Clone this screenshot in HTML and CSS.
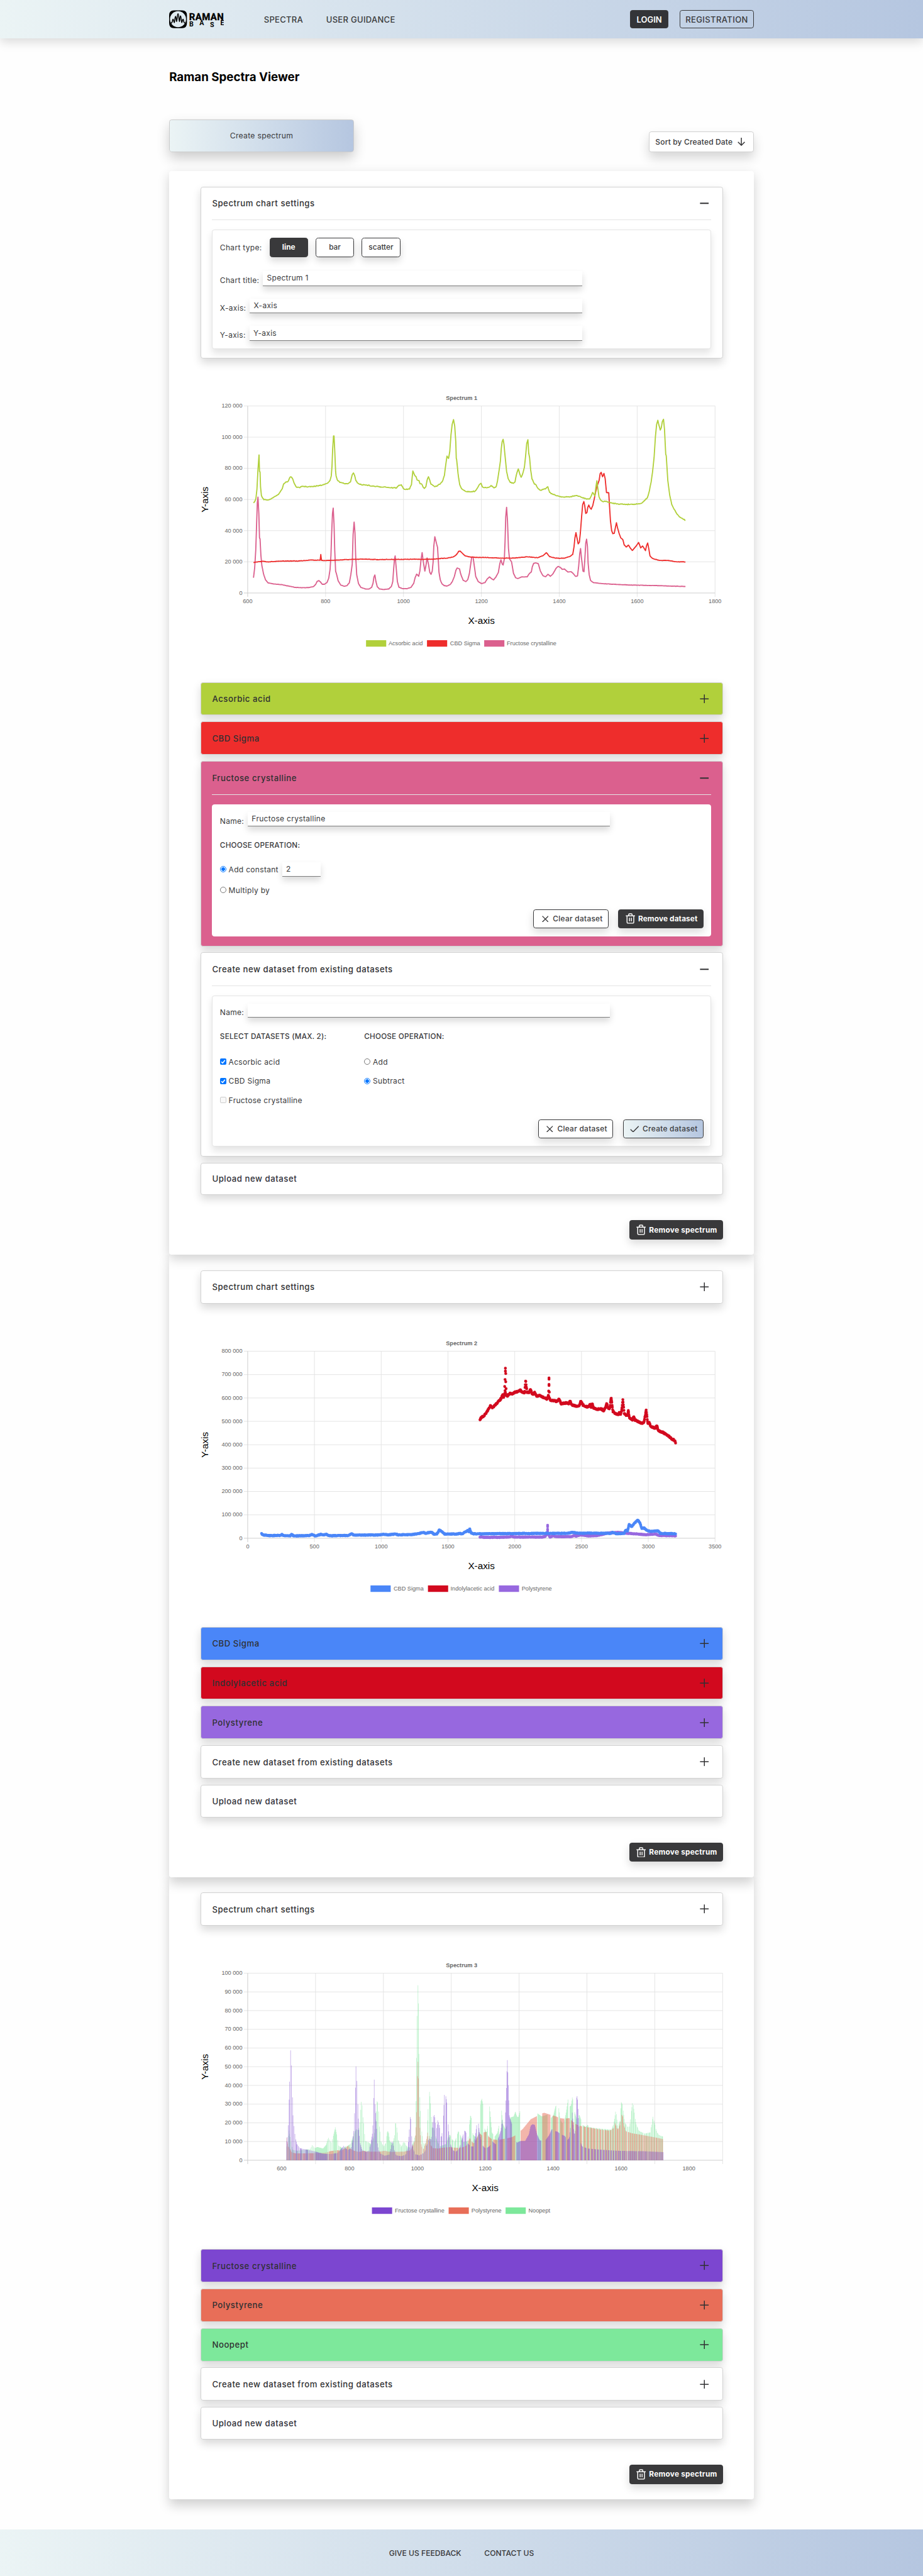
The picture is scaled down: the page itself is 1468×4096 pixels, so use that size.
FILE: index.html
```html
<!DOCTYPE html>
<html lang="en">
<head>
<meta charset="utf-8">
<title>Raman Spectra Viewer</title>
<link rel="stylesheet" href="styles.css">
</head>
<body>
<svg class="sprite" aria-hidden="true">
  <symbol id="i-plus" viewBox="0 0 20 20"><path d="M10 .5v19M.5 10h19" fill="none" stroke="currentColor" stroke-width="2"/></symbol>
  <symbol id="i-minus" viewBox="0 0 20 20"><path d="M.5 10h19" fill="none" stroke="currentColor" stroke-width="2.8"/></symbol>
  <symbol id="i-trash" viewBox="0 0 20 22"><path d="M.5 5.5h19M6.5 5V2.8Q6.500 1.200 8 1.200h4q1.500 0 1.500 1.600V5M3 5.500V19q0 2 2 2h10q2 0 2-2V5.500M8 9.500v7.500M12 9.500v7.500" fill="none" stroke="currentColor" stroke-width="1.900"/></symbol>
  <symbol id="i-x" viewBox="0 0 14 14"><path d="M.8.8l12.400 12.400M13.200.8L.8 13.200" fill="none" stroke="currentColor" stroke-width="1.800"/></symbol>
  <symbol id="i-check" viewBox="0 0 19 14"><path d="M1 7.500l5.500 5.300L18 .9" fill="none" stroke="currentColor" stroke-width="1.900"/></symbol>
</svg>

<header class="topbar">
  <div class="wrap topbar-in">
    <svg class="logo" viewBox="0 0 114 38">
      <path fill-rule="evenodd" d="M10 .5h17q10 0 10 10v17q0 10-10 10H10q-10 0-10-10v-17Q0 .5 10 .5zM18.500 2.300a16.700 16.700 0 1 0 0 33.400 16.700 16.700 0 1 0 0-33.400z"/>
      <path class="logo-wave" d="M3 27.500C8 27.500 6.500 19 8 19S9.500 26 10.700 26 11.800 13 13.300 13 14.600 24 15.600 24 16.800 7.500 18.500 7.500 20.400 24 21.400 24 22.200 12 23.700 12 25.300 26 26.300 26 27.500 19 29 19 29 27.500 34 27.500"/>
      <text class="logo-a" x="41.500" y="20.300" textLength="72" lengthAdjust="spacing">RAMAN</text>
      <g class="logo-b"><text x="42" y="34.300">B</text><text x="63" y="32">A</text><text x="85" y="35">S</text><text x="106.500" y="32">E</text></g>
    </svg>
    <nav class="nav"><a>SPECTRA</a><a>USER GUIDANCE</a></nav>
    <div class="auth"><a class="login">LOGIN</a><a class="registration">REGISTRATION</a></div>
  </div>
</header>

<main class="wrap">
  <h1>Raman Spectra Viewer</h1>
  <div class="toolbar">
    <button class="create">Create spectrum</button>
    <button class="sort">Sort by Created Date <svg viewBox="0 0 16 17"><path d="M8 0v15.500M1 8.800l7 7 7-7"/></svg></button>
  </div>

  <section class="card">
    <div class="item open settings">
      <div class="head"><span>Spectrum chart settings</span><svg><use href="#i-minus"/></svg></div>
      <div class="panel">
        <div class="types"><span>Chart type:</span><button class="on">line</button><button>bar</button><button>scatter</button></div>
        <div class="field"><label>Chart title:</label><span class="input">Spectrum 1</span></div>
        <div class="field"><label>X-axis:</label><span class="input">X-axis</span></div>
        <div class="field"><label>Y-axis:</label><span class="input">Y-axis</span></div>
      </div>
    </div>
    <svg class="chart" id="chart1" viewBox="0 0 1086 544"></svg>
    <div class="item lime"><div class="head"><span>Acsorbic acid</span><svg><use href="#i-plus"/></svg></div></div>
    <div class="item red"><div class="head"><span>CBD Sigma</span><svg><use href="#i-plus"/></svg></div></div>
    <div class="item pink open">
      <div class="head"><span>Fructose crystalline</span><svg><use href="#i-minus"/></svg></div>
      <div class="panel">
        <div class="field name"><label>Name:</label><span class="input">Fructose crystalline</span></div>
        <h4>CHOOSE OPERATION:</h4>
        <div class="op"><i class="radio checked"></i><span>Add constant</span><span class="input num">2</span></div>
        <div class="op second"><i class="radio"></i><span>Multiply by</span></div>
        <div class="actions"><button class="btn"><svg class="x"><use href="#i-x"/></svg>Clear dataset</button><button class="btn dark"><svg class="trash"><use href="#i-trash"/></svg>Remove dataset</button></div>
      </div>
    </div>
    <div class="item open">
      <div class="head"><span>Create new dataset from existing datasets</span><svg><use href="#i-minus"/></svg></div>
      <div class="panel">
        <div class="field name"><label>Name:</label><span class="input"></span></div>
        <div class="choices">
          <div class="col sets">
            <h4>SELECT DATASETS (MAX. 2):</h4>
            <div class="opt"><i class="box checked"><svg viewBox="0 0 13 13"><path d="M2.600 6.800l2.700 2.700 5-6"/></svg></i><span>Acsorbic acid</span></div>
            <div class="opt"><i class="box checked"><svg viewBox="0 0 13 13"><path d="M2.600 6.800l2.700 2.700 5-6"/></svg></i><span>CBD Sigma</span></div>
            <div class="opt"><i class="box off"></i><span>Fructose crystalline</span></div>
          </div>
          <div class="col">
            <h4>CHOOSE OPERATION:</h4>
            <div class="opt"><i class="radio"></i><span>Add</span></div>
            <div class="opt"><i class="radio checked"></i><span>Subtract</span></div>
          </div>
        </div>
        <div class="actions"><button class="btn"><svg class="x"><use href="#i-x"/></svg>Clear dataset</button><button class="btn blend"><svg class="check"><use href="#i-check"/></svg>Create dataset</button></div>
      </div>
    </div>
    <div class="item upload">Upload new dataset</div>
    <button class="btn dark remove"><svg class="trash"><use href="#i-trash"/></svg>Remove spectrum</button>
  </section>

  <section class="card">
    <div class="item"><div class="head"><span>Spectrum chart settings</span><svg><use href="#i-plus"/></svg></div></div>
    <svg class="chart" id="chart2" viewBox="0 0 1086 544"></svg>
    <div class="item blue"><div class="head"><span>CBD Sigma</span><svg><use href="#i-plus"/></svg></div></div>
    <div class="item crimson"><div class="head"><span>Indolylacetic acid</span><svg><use href="#i-plus"/></svg></div></div>
    <div class="item lilac"><div class="head"><span>Polystyrene</span><svg><use href="#i-plus"/></svg></div></div>
    <div class="item"><div class="head"><span>Create new dataset from existing datasets</span><svg><use href="#i-plus"/></svg></div></div>
    <div class="item upload">Upload new dataset</div>
    <button class="btn dark remove"><svg class="trash"><use href="#i-trash"/></svg>Remove spectrum</button>
  </section>

  <section class="card">
    <div class="item"><div class="head"><span>Spectrum chart settings</span><svg><use href="#i-plus"/></svg></div></div>
    <svg class="chart" id="chart3" viewBox="0 0 1086 544"></svg>
    <div class="item violet"><div class="head"><span>Fructose crystalline</span><svg><use href="#i-plus"/></svg></div></div>
    <div class="item coral"><div class="head"><span>Polystyrene</span><svg><use href="#i-plus"/></svg></div></div>
    <div class="item mint"><div class="head"><span>Noopept</span><svg><use href="#i-plus"/></svg></div></div>
    <div class="item"><div class="head"><span>Create new dataset from existing datasets</span><svg><use href="#i-plus"/></svg></div></div>
    <div class="item upload">Upload new dataset</div>
    <button class="btn dark remove"><svg class="trash"><use href="#i-trash"/></svg>Remove spectrum</button>
  </section>
</main>

<footer class="footer"><a>GIVE US FEEDBACK</a><a>CONTACT US</a></footer>
<script src="charts.js"></script>
</body>
</html>
```
FILE: styles.css
```css
* { box-sizing: border-box; }
html { background: #fff; overflow: hidden; }
body {
  margin: 0;
  width: 100%;
  height: 5357px;
  zoom: 0.76458;
  display: flex;
  flex-direction: column;
  font: 400 15px Inter, "Liberation Sans", sans-serif;
  color: #39393b;
  background: #fefefe;
}
button { font: inherit; color: inherit; margin: 0; }
h1, h4 { margin: 0; }
.sprite { display: none; }
.wrap { width: 1216px; margin: 0 auto; }

.topbar {
  height: 80px;
  flex: none;
  background: linear-gradient(90deg, #ebf4f5, #b5c6e0);
  box-shadow: 0 8px 20px rgba(0, 0, 0, .14);
}
.topbar-in { height: 80px; display: flex; align-items: center; }
.logo { width: 114px; height: 38px; }
.logo-wave { fill: none; stroke: #000; stroke-width: 2; }
.logo-a { font: 700 19.500px Roboto, sans-serif; stroke: #000; stroke-width: .5; }
.logo-b { font: 700 14px Roboto, sans-serif; }
.nav { display: flex; gap: 48px; margin-left: 83px; font-size: 17px; letter-spacing: .4px; font-weight: 450; }
.auth { display: flex; gap: 24px; margin-left: auto; }
.login, .registration {
  height: 38px;
  display: flex;
  align-items: center;
  justify-content: center;
  border: 1.500px solid #39393b;
  border-radius: 5px;
  font-size: 17px;
}
.login { width: 79px; background: #333438; color: #fff; font-weight: 600; }
.registration { width: 154px; font-weight: 450; letter-spacing: .55px; }

h1 { margin-top: 66px; height: 28px; line-height: 28px; font-size: 24.500px; font-weight: 700; color: #000; white-space: nowrap; }
.toolbar { display: flex; justify-content: space-between; align-items: flex-end; margin-top: 74px; height: 68px; }
.create {
  width: 384px;
  height: 68px;
  border: 1.500px solid #ccc;
  border-radius: 5px;
  background: linear-gradient(90deg, #ebf4f5, #b5c6e0);
  box-shadow: 0 12px 26px rgba(0, 0, 0, .2);
  font-size: 16px;
  letter-spacing: .35px;
}
.sort {
  width: 218px;
  height: 42px;
  padding: 0 12px;
  display: flex;
  align-items: center;
  justify-content: space-between;
  border: 1.500px solid #d0d0d0;
  border-radius: 5px;
  background: #fff;
  box-shadow: 0 12px 22px rgba(0, 0, 0, .16);
  font-size: 15.700px;
  letter-spacing: .2px;
  font-weight: 500;
  white-space: nowrap;
}
.sort svg { width: 16px; height: 17px; margin-right: 4px; fill: none; stroke: #39393b; stroke-width: 2; }

.card {
  display: flex;
  flex-direction: column;
  padding: 32px 64px 32px 65px;
  border-radius: 5px;
  background: #fff;
  box-shadow: 0 8px 24px rgba(0, 0, 0, .18);
}
.toolbar + .card { margin-top: 40px; }
.card + .card { box-shadow: 0 12px 24px rgba(0, 0, 0, .18); clip-path: inset(0 -50px -50px -50px); }
.card { position: relative; z-index: 3; }
.card + .card { z-index: 2; }
.card + .card + .card { z-index: 1; }

.item {
  border: 1.500px solid #d2d2d2;
  border-radius: 5px;
  background: #fff;
  padding: 0 23px;
  box-shadow: 0 8px 18px rgba(0, 0, 0, .15);
  font-size: 17.200px;
  font-weight: 500;
}
.item + .item { margin-top: 13px; }
.head { height: 66.500px; display: flex; align-items: center; justify-content: space-between; letter-spacing: .72px; color: #303032; }
.head svg { width: 19px; height: 19px; margin-right: 5px; }
.open { padding-bottom: 19.500px; }
.open .head { height: 69px; border-bottom: 1.500px solid #e4e4e4; }
.upload { height: 67.500px; display: flex; align-items: center; letter-spacing: .72px; color: #303038; }
.lime { background: #b1d03b; }
.red { background: #ee2d2c; }
.pink { background: #db608e; }
.blue { background: #4a86f8; }
.crimson { background: #d2091e; }
.lilac { background: #9768df; }
.violet { background: #7c46d0; }
.coral { background: #e86e58; }
.mint { background: #7de89b; }

.panel {
  margin-top: 19.500px;
  padding: 15px;
  border: 1.500px solid #e4e4e4;
  border-radius: 5px;
  background: #fff;
  box-shadow: 0 8px 16px rgba(0, 0, 0, .11);
  font-size: 15.700px;
  letter-spacing: .4px;
  font-weight: 400;
}
.pink .panel { border-color: #fff; box-shadow: none; }
.types { display: flex; align-items: center; height: 41px; }
.types > span { width: 103px; }
.types button {
  width: 80px;
  height: 40px;
  margin-right: 16px;
  padding: 0;
  border: 1.500px solid #39393b;
  border-radius: 6px;
  background: #fff;
  box-shadow: 0 8px 16px rgba(0, 0, 0, .15);
  font-size: 15.500px;
  font-weight: 500;
}
.types button.on { background: #39393b; color: #fff; font-weight: 700; }
.field { display: flex; height: 31px; width: 753px; margin-top: 26px; white-space: nowrap; }
.types + .field { margin-top: 29px; }
.field label { margin: 9px 8px 0 0; }
.input {
  flex: 1;
  padding: 5.500px 8px;
  border-bottom: 1.500px solid #7d7d7d;
  box-shadow: 0 8px 14px rgba(0, 0, 0, .15);
  background: #fff;
  line-height: 19px;
}
.field.name { margin-top: 0; height: 30px; width: 811px; }
h4 { margin-top: 30px; height: 20px; line-height: 20px; font-size: 15.300px; font-weight: 500; letter-spacing: .3px; }
.op { display: flex; align-items: center; height: 30px; margin-top: 24px; }
.op .num { flex: none; width: 80px; height: 30px; margin-left: 8px; }
.op.second { height: 20px; margin-top: 18px; }
.radio, .box { width: 13px; height: 13px; margin-right: 5px; flex: none; border: 1.500px solid #777; background: #fff; }
.radio { border-radius: 50%; }
.radio.checked { border-color: #0075ff; background: radial-gradient(circle, #0075ff 0 3.500px, #fff 4px); }
.box { border-radius: 2.500px; }
.box.checked { border: 0; background: #0075ff; }
.box.off { border-color: #ccc; background: #f8f8f8; }
.box svg { display: block; fill: none; stroke: #fff; stroke-width: 2; }
.choices { display: flex; }
.sets { width: 300px; }
.choices h4 + .opt { margin-top: 31px; }
.opt { display: flex; align-items: center; height: 20px; margin-top: 20px; }
.actions { display: flex; justify-content: flex-end; gap: 20px; margin-top: 30px; }
.btn {
  height: 40px;
  padding: 0 11px 0 14px;
  display: flex;
  align-items: center;
  border: 1.500px solid #39393b;
  border-radius: 5px;
  background: #fff;
  box-shadow: 0 8px 18px rgba(0, 0, 0, .15);
  font-size: 15.500px;
  letter-spacing: .4px;
  font-weight: 500;
  white-space: nowrap;
}
.dark { background: #39393b; color: #fff; font-weight: 650; letter-spacing: .15px; }
.blend { background: linear-gradient(90deg, #ebf4f5, #b5c6e0); }
.btn .x { width: 14px; height: 14px; margin: 0 9px 0 2px; }
.btn .check { width: 19px; height: 14px; margin-right: 7px; }
.btn .trash { width: 20px; height: 22px; margin-right: 6px; }
.remove { align-self: flex-end; margin-top: 52.500px; letter-spacing: .3px; }

.chart { width: 1086px; height: 544.500px; margin: 64px 0; display: block; overflow: visible; }
.chart text { font: 12px "Liberation Sans", Arial, sans-serif; fill: #666; }
.chart .title { font-weight: 700; }
.chart .axis { font-size: 20px; fill: #000; }
.chart .grid { stroke: #e2e2e2; stroke-width: 1.200; fill: none; }
.chart .base { stroke: #c9c9c9; stroke-width: 1.200; fill: none; }

.footer {
  margin-top: auto;
  height: 96px;
  flex: none;
  display: flex;
  align-items: center;
  justify-content: center;
  gap: 48px;
  background: linear-gradient(90deg, #ebf4f5, #b5c6e0);
  font-size: 15.800px;
  font-weight: 450;
}
```
FILE: charts.js
```js
const NS = 'http://www.w3.org/2000/svg';
const TOP = 34.4, BOTTOM = 423.4, LEFT = 98;

function el(svg, tag, attrs, text) {
  const e = document.createElementNS(NS, tag);
  for (const k in attrs) e.setAttribute(k, attrs[k]);
  if (text !== undefined) e.textContent = text;
  svg.appendChild(e);
  return e;
}

let seed = 7;
const rnd = () => (seed = (seed * 16807) % 2147483647) / 2147483647 - 0.5;

// "x,y x,y ..." -> [[x, y], ...]
const parse = s => s.trim().split(/\s+/).map(p => p.split(',').map(Number));

function at(pts, x) {
  for (let i = 1; i < pts.length; i++) {
    if (x <= pts[i][0]) {
      const [x0, y0] = pts[i - 1], [x1, y1] = pts[i];
      return y0 + (y1 - y0) * (x - x0) / (x1 - x0 || 1);
    }
  }
  return pts[pts.length - 1][1];
}

function frame(svg, o) {
  const n = o.yLabels.length - 1;
  let d = '';
  o.yLabels.forEach((label, i) => {
    const y = BOTTOM - (BOTTOM - TOP) * i / n;
    if (i) d += `M${LEFT - 8} ${y}H${o.right}`;
    el(svg, 'text', { x: LEFT - 11, y: y + 3.6, 'text-anchor': 'end' }, label);
  });
  o.xLines.forEach((x, i) => { if (i) d += `M${x} ${TOP}V${BOTTOM + 8}`; });
  el(svg, 'path', { d, class: 'grid' });
  el(svg, 'path', { d: `M${LEFT} ${TOP}V${BOTTOM + 8}M${LEFT - 8} ${BOTTOM}H${o.right}`, class: 'base' });
  o.xLabels.forEach(([x, t]) => el(svg, 'text', { x, y: 445, 'text-anchor': 'middle' }, t));
  el(svg, 'text', { x: 543, y: 21.5, 'text-anchor': 'middle', class: 'title' }, o.title);
  el(svg, 'text', { x: o.mid, y: 488, 'text-anchor': 'middle', class: 'axis' }, 'X-axis');
  el(svg, 'text', { x: 0, y: 0, 'text-anchor': 'middle', class: 'axis', transform: 'translate(16 229) rotate(-90)' }, 'Y-axis');
  o.legend.forEach(([x, color, tx, t]) => {
    el(svg, 'rect', { x, y: 521.5, width: 42, height: 13.5, fill: color });
    el(svg, 'text', { x: tx, y: 531.8 }, t);
  });
}

const steps = (a, b, n) => Array.from({ length: n + 1 }, (_, i) => a + (b - a) * i / n);
const thousands = (max, step) => {
  const out = ['0'];
  for (let v = step; v <= max; v += step) out.push(v + ' 000');
  return out;
};

// Spectrum 1: lines
{
  const svg = document.getElementById('chart1');
  const xs = steps(LEFT, 1070.2, 6);
  frame(svg, {
    title: 'Spectrum 1', right: 1070.2, mid: 584.2, xLines: xs,
    xLabels: xs.map((x, i) => [x, 600 + i * 200]), yLabels: thousands(120, 20),
    legend: [[344.2, '#b1d03b', 391, 'Acsorbic acid'], [471, '#ee2d2c', 519, 'CBD Sigma'], [590, '#db608e', 637, 'Fructose crystalline']]
  });
  const series = [
    ['#db608e', 1.5, `357,1108 364,1050 370,950 375,800 379,680 383,647 388,740 392,880 395,885 400,980 406,1040 415,1085 427,1120 442,1137 480,1144 520,1147 560,1155 600,1163 640,1165 680,1164 707,1158 718,1147 728,1128 738,1124 747,1132 757,1145 770,1145 785,1135 795,1110 803,1060 808,980 812,860 817,740 821,709 826,800 830,950 835,1070 840,1085 850,1125 865,1150 885,1156 900,1154 915,1137 924,1090 932,1030 937,860 943,789 948,850 952,980 958,1090 968,1140 982,1163 1010,1172 1030,1172 1045,1163 1053,1140 1058,1105 1064,1092 1070,1130 1078,1160 1090,1172 1115,1175 1145,1172 1160,1158 1168,1130 1173,1060 1178,1000 1182,983 1187,1040 1195,1130 1204,1162 1225,1170 1250,1171 1275,1162 1290,1140 1299,1105 1307,1087 1319,1099 1326,1070 1332,1010 1339,964 1345,1010 1355,1070 1361,1040 1368,995 1376,1030 1384,1078 1391,1088 1398,1070 1403,1020 1407,930 1413,873 1420,900 1429,935 1433,1000 1437,1075 1445,1120 1455,1143 1468,1153 1485,1155 1502,1147 1515,1130 1527,1100 1536,1065 1543,1052 1557,1057 1562,1080 1568,1098 1578,1122 1593,1130 1605,1118 1614,1085 1622,1030 1628,990 1636,990 1643,1040 1651,1100 1666,1130 1685,1141 1705,1136 1718,1115 1732,1103 1743,1113 1755,1120 1768,1105 1783,1078 1791,1030 1798,1005 1806,1030 1811,1035 1818,1000 1822,900 1826,760 1831,705 1836,780 1842,940 1848,1000 1860,1017 1871,1082 1883,1107 1896,1112 1918,1103 1951,1103 1963,1085 1975,1075 1981,1045 1989,1025 2001,1023 2016,1028 2028,1070 2043,1096 2058,1102 2072,1088 2086,1100 2103,1083 2118,1055 2131,1043 2143,1048 2155,1060 2168,1058 2188,1075 2208,1074 2220,1085 2233,1100 2244,1097 2251,1040 2257,970 2262,941 2268,1000 2276,1070 2282,1073 2287,1000 2292,910 2297,887 2302,930 2306,1025 2312,1090 2320,1123 2338,1136 2388,1141 2468,1146 2568,1150 2718,1153 2873,1158`],
    ['#ee2d2c', 2.5, `357,1021 380,1018 410,1013 440,1017 500,1014 560,1012 620,1012 690,1006 745,1008 749,975 753,1009 820,1008 900,1004 1010,1001 1080,1004 1150,1003 1300,1002 1400,1002 1440,998 1490,995 1520,989 1540,975 1552,956 1560,955 1568,962 1588,982 1618,989 1668,992 1718,992 1788,996 1868,995 1953,988 2013,993 2043,982 2063,965 2083,988 2118,996 2168,996 2198,987 2216,975 2224,930 2229,880 2235,850 2241,880 2248,914 2255,905 2261,850 2268,760 2274,690 2281,672 2286,695 2292,740 2299,735 2304,705 2310,692 2317,708 2324,716 2333,695 2341,660 2349,620 2356,590 2363,570 2370,550 2376,512 2382,505 2390,530 2398,511 2405,540 2413,620 2426,622 2430,690 2436,780 2443,838 2450,856 2458,854 2465,820 2471,793 2478,825 2486,853 2496,880 2508,890 2516,920 2528,932 2541,921 2553,940 2563,952 2578,935 2590,920 2600,906 2612,937 2623,926 2640,953 2646,925 2653,909 2660,945 2666,982 2678,995 2698,1003 2728,1009 2768,1009 2818,1016 2873,1018`],
    ['#b1d03b', 5, `357,679 365,670 371,655 377,600 383,490 389,405 392,500 395,502 398,590 403,638 410,652 418,662 435,662 455,658 470,650 485,642 503,630 515,612 525,597 532,572 545,560 553,560 561,552 568,535 577,531 584,540 592,563 601,580 610,591 627,593 640,584 665,587 700,587 730,582 760,577 785,568 803,550 810,525 814,470 818,370 823,296 826,296 830,380 835,500 838,525 845,548 860,563 872,564 890,571 910,568 922,560 932,518 939,508 945,520 953,552 965,567 985,576 1015,577 1045,583 1085,587 1120,588 1150,592 1190,594 1205,578 1218,576 1230,598 1244,603 1266,600 1277,575 1285,497 1295,520 1303,528 1310,549 1320,551 1327,570 1335,570 1345,590 1352,597 1361,587 1368,550 1376,530 1383,548 1391,573 1402,580 1412,587 1430,580 1447,568 1460,550 1469,522 1477,460 1484,412 1493,425 1500,385 1507,290 1514,230 1522,203 1529,240 1535,330 1538,425 1540,430 1548,510 1558,575 1568,597 1583,608 1598,615 1618,617 1646,613 1661,595 1672,575 1682,567 1690,588 1703,592 1728,590 1741,580 1758,594 1771,585 1778,555 1788,490 1795,440 1800,370 1805,330 1811,316 1816,345 1824,430 1831,500 1840,540 1853,563 1870,568 1880,560 1888,520 1899,485 1908,515 1916,533 1924,515 1935,475 1942,410 1948,340 1955,318 1960,395 1965,420 1971,490 1979,543 1993,572 2003,577 2015,598 2031,607 2048,600 2060,597 2071,587 2082,620 2103,632 2138,642 2168,647 2203,644 2238,637 2268,648 2293,656 2315,657 2324,640 2332,620 2345,640 2351,590 2357,553 2363,600 2369,643 2380,665 2390,672 2413,671 2438,680 2478,685 2528,688 2568,687 2593,686 2620,680 2633,667 2651,650 2663,610 2673,560 2681,505 2690,420 2698,300 2705,230 2712,207 2718,235 2726,263 2732,250 2738,215 2745,201 2751,260 2758,400 2761,410 2770,550 2781,635 2793,688 2808,718 2823,743 2838,760 2853,768 2873,779`]
  ];
  for (const [color, noise, data] of series) {
    const pts = parse(data);
    let d = '';
    const put = (x, y) => { d += (d ? 'L' : 'M') + ((x - 323) / 2.8 + LEFT).toFixed(1) + ' ' + ((y - 125) / 2.751 + TOP).toFixed(1); };
    pts.forEach(([x, y], i) => {
      put(x, y);
      const nx = pts[i + 1];
      if (nx) for (let t = x + 4; t < nx[0] - 3; t += 4) put(t, y + (nx[1] - y) * (t - x) / (nx[0] - x) + rnd() * noise);
    });
    el(svg, 'path', { d, fill: 'none', stroke: color, 'stroke-width': 2.4, 'stroke-linejoin': 'round' });
  }
}

// Spectrum 2: scatter
{
  const svg = document.getElementById('chart2');
  const xs = steps(LEFT, 1070.2, 7);
  frame(svg, {
    title: 'Spectrum 2', right: 1070.2, mid: 584.2, xLines: xs,
    xLabels: xs.map((x, i) => [x, i * 500]), yLabels: thousands(800, 100),
    legend: [[353.5, '#4a86f8', 401.500, 'CBD Sigma'], [473, '#d2091e', 520, 'Indolylacetic acid'], [620.5, '#9768df', 668, 'Polystyrene']]
  });
  const series = [
    ['#9768df', 3, `838,1200 842,1197 846,1201 890,1201 925,1199 930,1193 935,1199 1020,1200 1028,1195 1033,1180 1037,1185 1042,1200 1050,1192 1060,1197 1105,1197 1112,1190 1118,1194 1130,1187 1155,1193 1180,1190 1195,1184 1210,1176 1240,1173 1270,1178 1320,1186 1350,1182 1358,1190 1408,1192`, '1035,1132 1035,1140 1035,1155 1035,1165 1033,1176'],
    ['#d2091e', 7, `838,527 842,515 850,505 858,485 864,465 868,448 874,460 884,440 895,418 900,405 904,385 907,400 910,378 918,392 925,378 932,380 940,370 950,366 955,357 960,371 968,372 971,301 975,371 982,372 985,354 991,385 997,372 1003,393 1013,390 1025,403 1033,410 1037,392 1043,418 1055,418 1063,425 1068,408 1074,437 1087,432 1097,435 1100,418 1105,443 1118,450 1127,448 1132,418 1137,443 1152,457 1159,440 1162,455 1165,434 1169,462 1180,468 1191,465 1198,477 1203,460 1207,434 1211,460 1216,465 1220,396 1225,480 1232,493 1240,500 1244,487 1248,497 1251,470 1254,413 1258,490 1264,505 1268,500 1270,474 1273,517 1282,527 1286,512 1290,530 1300,540 1310,551 1316,540 1319,505 1322,474 1327,555 1330,542 1335,565 1348,578 1353,560 1357,590 1372,602 1385,618 1397,638 1405,647 1408,661`, '912,233 912,250 913,264 911,298 913,311 910,338 914,350 911,362 912,372 1039,289 1039,296 1039,326 1039,332 1038,364 1040,370 1037,388'],
    ['#4a86f8', 4, `202,1180 207,1188 225,1191 258,1190 261,1183 265,1191 285,1192 290,1184 295,1193 340,1191 349,1185 358,1193 375,1184 382,1188 390,1183 400,1192 455,1190 464,1180 470,1188 540,1188 557,1183 570,1187 592,1182 600,1187 640,1185 660,1180 672,1172 680,1178 697,1170 703,1182 712,1182 716,1172 719,1159 727,1168 735,1182 770,1182 780,1178 785,1183 795,1170 802,1162 806,1170 808,1150 812,1175 820,1181 950,1179 1095,1178 1108,1172 1120,1177 1220,1178 1224,1172 1235,1180 1258,1178 1263,1158 1268,1165 1272,1128 1280,1140 1288,1120 1297,1102 1304,1118 1309,1150 1316,1148 1325,1162 1335,1168 1345,1166 1357,1164 1363,1178 1385,1180 1408,1180`, '']
  ];
  for (const [color, noise, data, extra] of series) {
    const pts = parse(data);
    let d = '';
    const dot = (x, y) => { d += `M${((x - 161.5) / 1.4 + LEFT).toFixed(1)} ${((y - 136) / 2.751 + TOP).toFixed(1)}h.01`; };
    for (let x = pts[0][0]; x <= pts[pts.length - 1][0]; x += 0.8) dot(x, at(pts, x) + rnd() * noise);
    if (extra) parse(extra).forEach(([x, y]) => dot(x, y));
    el(svg, 'path', { d, fill: 'none', stroke: color, 'stroke-width': 6, 'stroke-linecap': 'round' });
  }
}

// Spectrum 3: bars
{
  const svg = document.getElementById('chart3');
  const right = 1086;
  frame(svg, {
    title: 'Spectrum 3', right, mid: 592, xLines: steps(LEFT, right, 7),
    xLabels: [600, 800, 1000, 1200, 1400, 1600, 1800].map((t, i) => [168.6 + i * 141.2, t]), yLabels: thousands(100, 10),
    legend: [[356.5, '#7c46d0', 404, 'Fructose crystalline'], [516, '#e86e58', 563.500, 'Polystyrene'], [634.5, '#7de89b', 682, 'Noopept']]
  });
  const series = [
    ['#7de89b', 2300, .70, `513,1130 520,1110 526,1036 532,1080 545,1150 570,1155 600,1150 640,1145 652,1122 665,1140 680,1133 710,1142 728,1120 738,1075 748,1095 755,1110 765,1075 777,1018 785,1060 795,1125 815,1140 845,1125 860,1115 880,1050 890,1030 903,1035 912,980 918,870 921,860 927,940 933,1020 940,1098 955,1105 970,1115 985,1080 995,1000 1001,890 1005,862 1010,890 1017,1010 1025,1100 1040,1130 1052,1110 1060,1040 1066,1045 1073,1100 1090,1115 1098,1070 1104,990 1110,1005 1118,1090 1135,1132 1150,1100 1165,1130 1190,1138 1205,1090 1213,1060 1217,800 1220,450 1223,250 1227,182 1230,350 1232,640 1238,890 1243,1000 1252,1090 1265,1130 1275,1070 1281,920 1287,792 1292,840 1298,940 1305,1020 1312,1020 1325,1080 1345,1130 1380,1115 1392,1070 1400,1060 1410,1085 1425,1105 1440,1060 1446,1040 1460,1070 1470,1105 1495,1100 1503,1030 1512,945 1518,970 1525,1060 1540,1075 1549,1080 1559,1030 1567,870 1574,853 1580,885 1587,1020 1599,1050 1607,1000 1616,895 1622,970 1629,1050 1644,1072 1659,1050 1667,1000 1674,1000 1681,920 1689,1000 1701,1030 1714,1000 1731,960 1747,955 1756,925 1764,955 1772,960 1784,910 1877,938 1899,955 1929,945 1949,965 1962,950 1976,888 1984,960 1990,888 1999,970 2011,995 2022,985 2032,930 2043,848 2049,900 2059,890 2066,840 2076,920 2089,970 2104,945 2112,970 2121,1005 2139,1015 2149,1005 2159,1018 2209,1025 2279,1033 2294,980 2303,908 2312,1020 2324,980 2332,870 2339,890 2349,985 2364,1015 2377,1015 2386,930 2394,860 2402,930 2412,1000 2429,1040 2459,1055 2489,1048 2497,1000 2504,955 2514,1000 2524,1045 2539,1065 2561,1073`],
    ['#e86e58', 5300, .71, `513,1080 516,1075 520,1130 527,1135 540,1165 560,1170 620,1170 700,1168 730,1165 750,1157 790,1152 810,1155 830,1140 848,1126 862,1145 880,1155 905,1162 930,1155 955,1160 1020,1160 1045,1155 1075,1162 1150,1160 1185,1153 1200,1120 1212,1090 1217,1000 1222,780 1227,618 1232,900 1238,1050 1246,1130 1258,1145 1268,1110 1275,1080 1281,1030 1288,1080 1295,1120 1308,1140 1335,1142 1360,1137 1400,1134 1440,1138 1470,1135 1490,1125 1508,1080 1517,1100 1530,1112 1545,1085 1559,1050 1574,1065 1584,1048 1597,1045 1611,1073 1629,1088 1659,1092 1699,1085 1734,1077 1757,1065 1796,1028 1819,998 1839,972 1864,958 1904,936 1914,934 1944,945 1969,952 1999,965 2019,968 2049,965 2071,988 2089,1003 2119,1013 2159,1020 2209,1030 2269,1038 2289,1025 2297,992 2307,1020 2314,1030 2324,1005 2332,944 2339,950 2347,1010 2357,1042 2389,1053 2429,1060 2469,1068 2519,1078 2561,1088`],
    ['#7c46d0', 8500, .67, `513,1100 519,1045 524,940 529,740 532,558 537,590 542,750 547,950 553,1020 559,1070 568,1117 585,1140 610,1146 640,1152 670,1160 710,1172 750,1174 790,1168 812,1140 822,1125 832,1140 845,1150 862,1140 872,1090 878,1020 883,900 886,820 890,632 895,760 899,860 904,1020 910,1100 922,1150 945,1162 960,1155 970,1110 979,1050 984,930 989,725 994,890 1000,1000 1008,1130 1020,1170 1045,1184 1070,1178 1083,1120 1088,1085 1095,1140 1108,1182 1135,1186 1160,1178 1172,1130 1178,1060 1183,955 1187,965 1195,1120 1210,1175 1235,1182 1262,1165 1278,1110 1288,1080 1298,1090 1305,1020 1312,930 1318,960 1325,1050 1330,1010 1335,965 1343,1015 1353,1080 1362,1020 1370,830 1375,820 1380,850 1386,895 1392,1020 1398,1100 1415,1150 1430,1162 1450,1145 1465,1090 1478,1036 1487,1045 1497,1110 1512,1130 1527,1130 1538,1070 1546,1000 1553,970 1560,1040 1574,1120 1594,1142 1614,1130 1631,1100 1649,1118 1664,1080 1677,1035 1684,975 1691,1040 1701,960 1707,800 1712,613 1717,750 1723,950 1737,1000 1749,1080 1764,1108 1784,1098 1809,1098 1829,1060 1839,1010 1849,1000 1862,1005 1874,1060 1889,1095 1919,1095 1939,1065 1954,1028 1964,1040 1984,1043 2004,1060 2024,1068 2039,1092 2049,1080 2057,1000 2064,915 2071,1010 2077,1065 2084,1020 2089,840 2093,835 2099,960 2106,1090 2119,1130 2149,1142 2209,1148 2309,1155 2459,1158 2561,1163`]
  ];
  const CENTER = 1829, PX = 2.6133;
  for (const [color, phase, duty, data] of series) {
    const pts = parse(data);
    let d = '';
    for (let x = 513; x <= 2561; x += PX) {
      const p = ((x - CENTER) ** 2 - phase) / 11800;
      if (p - Math.floor(p) > duty) continue;
      const y = (at(pts, x) - 121) / 2.8 + TOP;
      d += `M${((x - 302) / PX + LEFT).toFixed(2)} ${BOTTOM}V${y.toFixed(1)}h1V${BOTTOM}z`;
    }
    el(svg, 'path', { d, fill: color, 'fill-opacity': .5 });
  }
}
```
